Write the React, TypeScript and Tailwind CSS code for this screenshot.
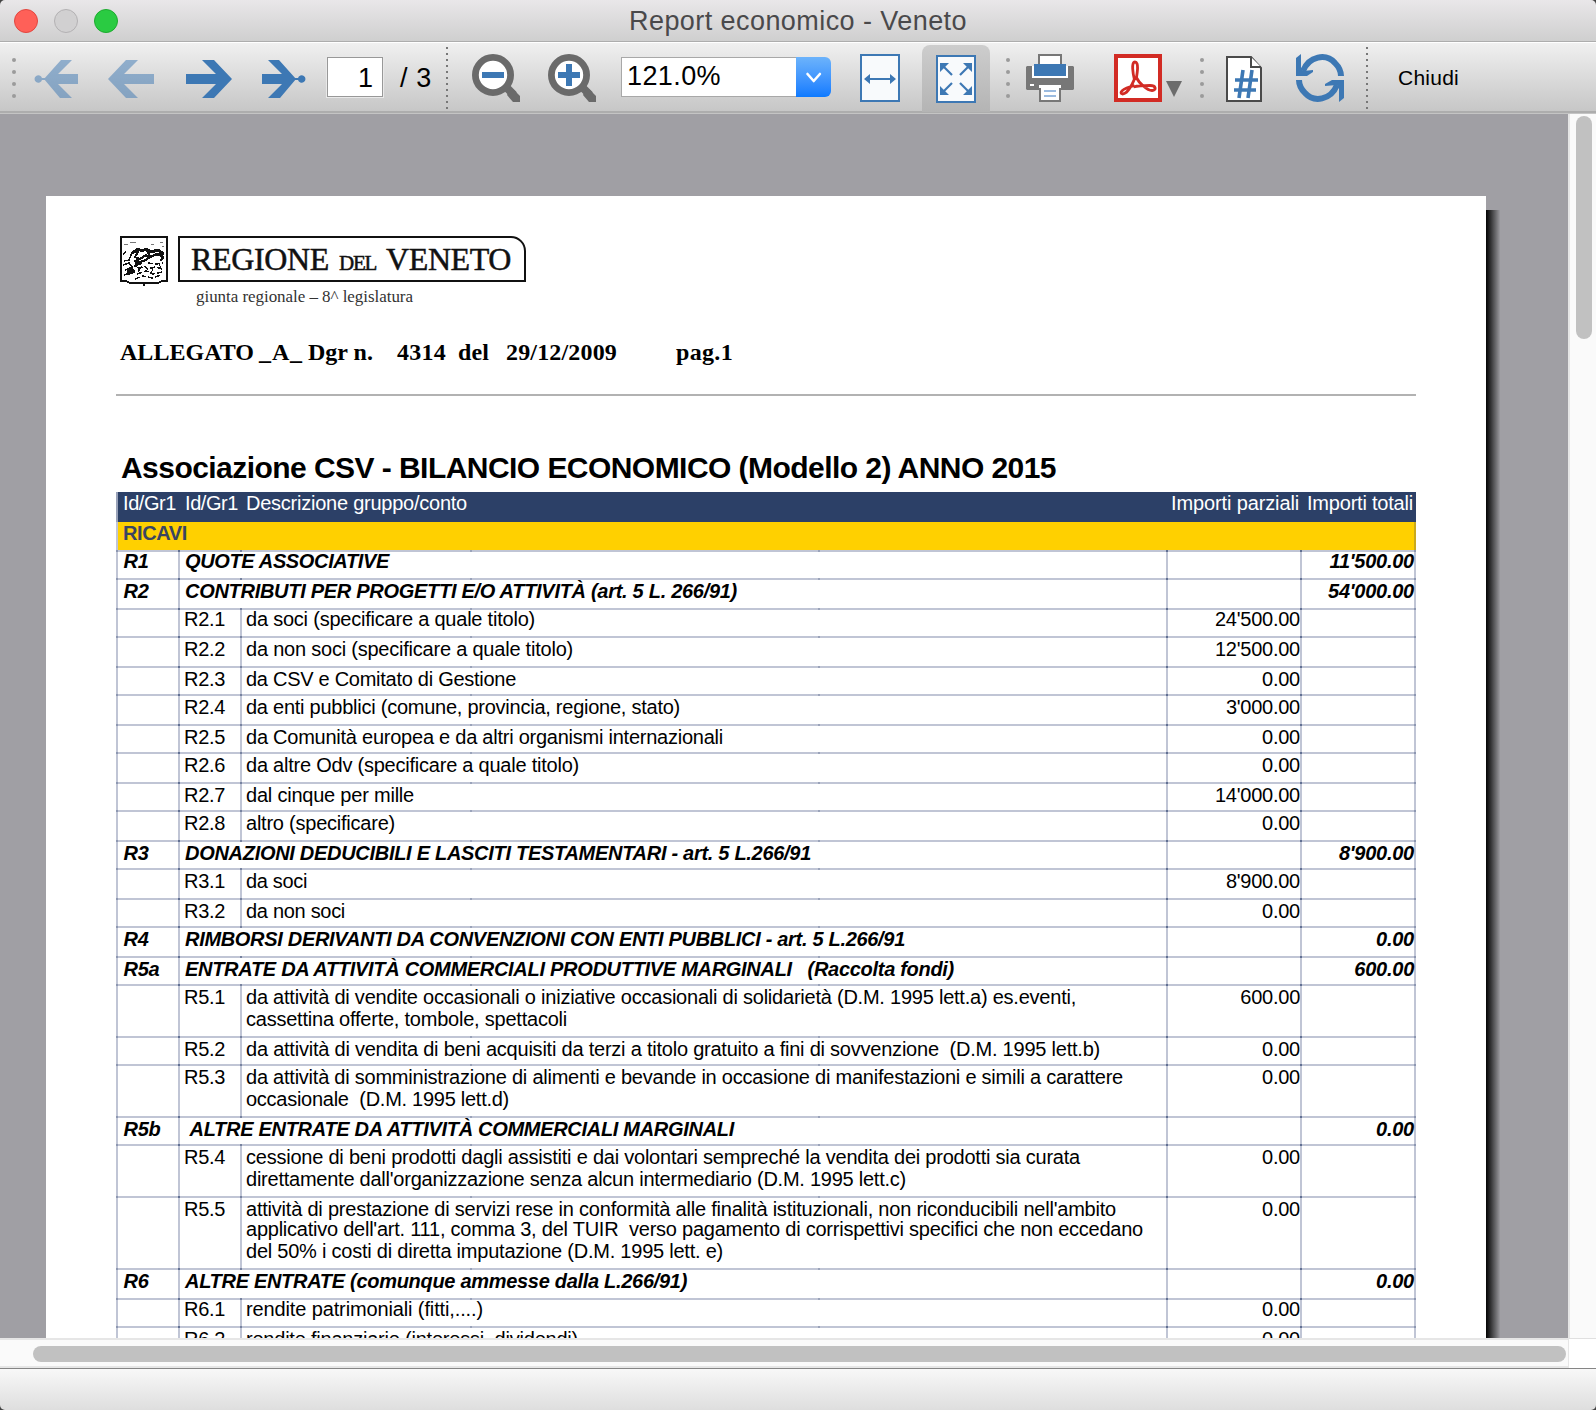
import { useLayoutEffect, useRef, useState } from "react";
import type { ReactNode } from "react";

const BLUE = "#3d78b4";

/** Single line of text whose tracking is adjusted so that it spans the given width. */
function Fit({ w, className = "", children }: { w: number; className?: string; children: string }) {
  const ref = useRef<HTMLSpanElement>(null);
  const [spacing, setSpacing] = useState(0);
  useLayoutEffect(() => {
    if (ref.current) {
      const natural = ref.current.getBoundingClientRect().width;
      setSpacing((w - natural) / children.length);
    }
  }, []);
  return (
    <span ref={ref} className={`inline-block whitespace-pre ${className}`} style={{ letterSpacing: spacing }}>
      {children}
    </span>
  );
}

function Arrow({ flip = false, end = false, faded = false }: { flip?: boolean; end?: boolean; faded?: boolean }) {
  const w = end ? 44 : 46;
  const d = end
    ? "M34 25 17 6H6l14 14H0v10h20L6 44h12z"
    : "M46 25 28 6H16l14 14H0v10h30L16 44h12z";
  return (
    <svg width={w} height="48" viewBox={`0 0 ${w} 48`} fill={BLUE} opacity={faded ? 0.5 : 1}>
      <g transform={flip ? `translate(${w} 0) scale(-1 1)` : undefined}>
        <path d={d} />
        {end && <path d="M32 24h4a3.8 3.8 0 1 1 0 2h-4z" />}
      </g>
    </svg>
  );
}

function Magnifier({ plus = false }: { plus?: boolean }) {
  return (
    <svg width="48" height="48" viewBox="0 0 48 48">
      <path d="M32 31 42 41" stroke="#6a6a6a" strokeWidth="8" />
      <path d="M38 35h3l7 7v6h-7l-6-7z" fill="#6a6a6a" />
      <circle cx="21" cy="21" r="17.6" fill="#fff" stroke="#6a6a6a" strokeWidth="6.8" />
      <path d="M10 18h22v6H10z" fill={BLUE} />
      {plus && <path d="M18 10h6v22h-6z" fill={BLUE} />}
    </svg>
  );
}

function Grip() {
  return (
    <div className="flex w-1 flex-col gap-2">
      {[0, 1, 2, 3].map((i) => (
        <span key={i} className="size-1 rounded-full bg-[#9b9b9b]" />
      ))}
    </div>
  );
}

function Dotted() {
  return (
    <div className="flex w-0.5 flex-col gap-1">
      {Array.from({ length: 11 }, (_, i) => (
        <span key={i} className="size-0.5 bg-[#777]" />
      ))}
    </div>
  );
}

function Toolbar() {
  return (
    <div className="flex h-[69px] items-center bg-linear-to-b from-[#f0f0f0] to-[#c6c6c6] pt-px pl-3 text-black">
      <Grip />
      <div className="ml-[18px]"><Arrow flip end faded /></div>
      <div className="ml-[30px]"><Arrow flip faded /></div>
      <div className="ml-8"><Arrow /></div>
      <div className="ml-[30px]"><Arrow end /></div>
      <div className="mt-[-2px] ml-5 flex h-[42px] w-[58px] items-center justify-end border border-[#e9e9e9]">
        <div className="flex h-10 w-14 items-center justify-end border border-[#989898] bg-white pt-0.5 pr-[9px] text-[27px]">1</div>
      </div>
      <div className="ml-4 w-8 text-[27px] leading-10"><Fit w={32}>/ 3</Fit></div>
      <div className="ml-3.5"><Dotted /></div>
      <div className="ml-6"><Magnifier /></div>
      <div className="ml-7"><Magnifier plus /></div>
      <div className="mt-[-3px] ml-[25px] flex h-10 w-[210px]">
        <div className="flex h-10 w-[175px] items-center border border-r-0 border-[#a8a8a8] bg-white pl-[5px] text-[27px]">
          <Fit w={94}>121.0%</Fit>
        </div>
        <div className="flex h-10 w-[35px] items-center justify-center rounded-r-md bg-linear-to-b from-[#6cb3fb] to-[#0b7aff]">
          <svg width="18" height="12" viewBox="0 0 18 12" fill="none" stroke="#fff" strokeWidth="2.6" strokeLinecap="round" strokeLinejoin="round">
            <path d="m2.5 3 6.2 7 6.2-7" />
          </svg>
        </div>
      </div>
      <svg className="ml-[29px]" width="40" height="48" viewBox="0 0 40 48">
        <path d="M1 1h38v46H1z" fill="#f8fafc" stroke={BLUE} strokeWidth="2" />
        <path d="M8 24h24v2H8z" fill={BLUE} />
        <path d="M4 25l6-5v10zM36 25l-6-5v10z" fill={BLUE} />
      </svg>
      <div className="ml-[22px] flex h-[67px] w-[68px] items-center justify-center self-end rounded-t-lg bg-linear-to-b from-[#cdcdcd] to-[#b4b4b4]">
        <svg width="40" height="48" viewBox="0 0 40 48">
          <path d="M1 1h38v46H1z" fill="#f8fafc" stroke={BLUE} strokeWidth="2" />
          <g fill={BLUE} stroke={BLUE} strokeWidth="2.2">
            <path d="m8 12 8 8M32 12l-8 8M8 36l8-8M32 36l-8-8" />
            <path stroke="none" d="M4 8h9l-9 9zM36 8h-9l9 9zM4 40h9l-9-9zM36 40h-9l9-9z" />
          </g>
        </svg>
      </div>
      <div className="ml-4"><Grip /></div>
      <svg className="ml-4" width="48" height="48" viewBox="0 0 48 48">
        <path d="M0 13l1-1h5v12h36V12h5l1 1v22l-1 1H1l-1-1z" fill="#777" />
        <path d="M13 1h22v12H13z" fill="#fff" stroke="#777" strokeWidth="2" />
        <path d="M6 12h36v12H6z" fill="#fff" />
        <path d="M8 10h32v12H8z" fill={BLUE} />
        <path d="M4 30h4v2H4z" fill="#fff" />
        <path d="M14 32h20v15H14z" fill="#fff" stroke="#777" strokeWidth="2" />
        <path d="M13 31h22v3H13z" fill="#fff" />
        <path d="M18 36h12v2H18zM18 41h12v2H18z" fill="#9bbbe0" />
      </svg>
      <svg className="ml-10" width="48" height="48" viewBox="0 0 48 48">
        <path d="M0 0h48v48H0z" fill="#d22b24" />
        <path d="M4 4h40v40H4z" fill="#fff" />
        <g fill="none" stroke="#d22b24" strokeWidth="2.8">
          <path d="M20.500 26C19 20 17 8 21 8s2.500 10 1 18" />
          <path d="M20.500 25C18 31 13 40 8.500 40c-3.500-1-1.500-5 12-8.500" />
          <path d="M22 23c3 6 11 13.500 16 13.500 5-.5 4-5-2-5-5 0-11 0-16.500 1.500" />
        </g>
      </svg>
      <svg className="mt-[21px] ml-1" width="16" height="16" viewBox="0 0 16 16">
        <path d="M0 0h16L8 16z" fill="#6c6c6c" />
      </svg>
      <div className="ml-[18px]"><Grip /></div>
      <svg className="ml-[22px]" width="36" height="48" viewBox="0 0 36 48">
        <path d="M1 3h24l10 11v33H1z" fill="#fff" stroke="#4a4a4a" strokeWidth="2" />
        <path d="M25 3v10h10" fill="#fff" stroke="#4a4a4a" strokeWidth="2" />
        <path d="m17 16-4 28M26 16l-4 28M9 26h23M8 36h22" stroke={BLUE} strokeWidth="3.600" />
      </svg>
      <svg className="ml-[34px]" width="48" height="48" viewBox="0 0 48 48">
        <path d="M7 17C13 2 30-1 39 9c4 4 6 8 6 13" fill="none" stroke={BLUE} strokeWidth="6" />
        <path d="M0 4 5 0v13l2 4 10-1v2l-6 4H0z" fill={BLUE} />
        <path d="M41 31C35 46 18 49 9 39c-4-4-6-8-6-13" fill="none" stroke={BLUE} strokeWidth="6" />
        <path d="M48 44l-5 4V35l-2-4-12 1v-2l7-4h12z" fill={BLUE} />
      </svg>
      <div className="ml-[22px]"><Dotted /></div>
      <div className="ml-[30px] text-[21px] leading-8"><Fit w={61}>Chiudi</Fit></div>
    </div>
  );
}

/** Horizontal table rule with darker marks where column lines meet it. */
function Rule() {
  return (
    <div className="grid h-0.5 grid-cols-[62px_62px_230px_348px_348px_134px_114px_2px] bg-[#c0c5d5]">
      <i className="w-0.5 bg-[#8d97b1]" />
      <i className="w-0.5 bg-[#5f6e91]" />
      <i className="w-0.5 bg-[#76829f]" />
      <i className="w-0.5 bg-[#9aa3ba]" />
      <i className="w-0.5 bg-[#9aa3ba]" />
      <i className="w-0.5 bg-[#5f6e91]" />
      <i className="w-0.5 bg-[#5f6e91]" />
      <i className="w-0.5 bg-[#8d97b1]" />
    </div>
  );
}

type Line = [string, number];
interface Entry {
  id: string;
  lines: Line[];
  amount: string;
  h: number;
  group?: boolean;
  raised?: boolean;
}

const rows: Entry[] = [
  { id: "R1", group: true, raised: true, h: 28, amount: "11'500.00", lines: [["QUOTE ASSOCIATIVE", 204]] },
  { id: "R2", group: true, h: 30, amount: "54'000.00", lines: [["CONTRIBUTI PER PROGETTI E/O ATTIVITÀ (art. 5 L. 266/91)", 552]] },
  { id: "R2.1", raised: true, h: 28, amount: "24'500.00", lines: [["da soci (specificare a quale titolo)", 289]] },
  { id: "R2.2", h: 30, amount: "12'500.00", lines: [["da non soci (specificare a quale titolo)", 327]] },
  { id: "R2.3", h: 28, amount: "0.00", lines: [["da CSV e Comitato di Gestione", 270]] },
  { id: "R2.4", h: 30, amount: "3'000.00", lines: [["da enti pubblici (comune, provincia, regione, stato)", 434]] },
  { id: "R2.5", h: 28, amount: "0.00", lines: [["da Comunità europea e da altri organismi internazionali", 477]] },
  { id: "R2.6", h: 30, amount: "0.00", lines: [["da altre Odv (specificare a quale titolo)", 333]] },
  { id: "R2.7", h: 28, amount: "14'000.00", lines: [["dal cinque per mille", 168]] },
  { id: "R2.8", h: 30, amount: "0.00", lines: [["altro (specificare)", 149]] },
  { id: "R3", group: true, h: 28, amount: "8'900.00", lines: [["DONAZIONI DEDUCIBILI E LASCITI TESTAMENTARI - art. 5 L.266/91", 626]] },
  { id: "R3.1", h: 30, amount: "8'900.00", lines: [["da soci", 61]] },
  { id: "R3.2", h: 28, amount: "0.00", lines: [["da non soci", 99]] },
  { id: "R4", group: true, h: 30, amount: "0.00", lines: [["RIMBORSI DERIVANTI DA CONVENZIONI CON ENTI PUBBLICI - art. 5 L.266/91", 720]] },
  { id: "R5a", group: true, h: 28, amount: "600.00", lines: [["ENTRATE DA ATTIVITÀ COMMERCIALI PRODUTTIVE MARGINALI   (Raccolta fondi)", 769]] },
  {
    id: "R5.1", h: 52, amount: "600.00",
    lines: [
      ["da attività di vendite occasionali o iniziative occasionali di solidarietà (D.M. 1995 lett.a) es.eventi,", 830],
      ["cassettina offerte, tombole, spettacoli", 321],
    ],
  },
  { id: "R5.2", h: 28, amount: "0.00", lines: [["da attività di vendita di beni acquisiti da terzi a titolo gratuito a fini di sovvenzione  (D.M. 1995 lett.b)", 854]] },
  {
    id: "R5.3", h: 52, amount: "0.00",
    lines: [
      ["da attività di somministrazione di alimenti e bevande in occasione di manifestazioni e simili a carattere", 877],
      ["occasionale  (D.M. 1995 lett.d)", 263],
    ],
  },
  { id: "R5b", group: true, h: 28, amount: "0.00", lines: [[" ALTRE ENTRATE DA ATTIVITÀ COMMERCIALI MARGINALI", 549]] },
  {
    id: "R5.4", h: 52, amount: "0.00",
    lines: [
      ["cessione di beni prodotti dagli assistiti e dai volontari sempreché la vendita dei prodotti sia curata", 834],
      ["direttamente dall'organizzazione senza alcun intermediario (D.M. 1995 lett.c)", 660],
    ],
  },
  {
    id: "R5.5", h: 72, amount: "0.00",
    lines: [
      ["attività di prestazione di servizi rese in conformità alle finalità istituzionali, non riconducibili nell'ambito", 870],
      ["applicativo dell'art. 111, comma 3, del TUIR  verso pagamento di corrispettivi specifici che non eccedano", 897],
      ["del 50% i costi di diretta imputazione (D.M. 1995 lett. e)", 477],
    ],
  },
  { id: "R6", group: true, h: 30, amount: "0.00", lines: [["ALTRE ENTRATE (comunque ammesse dalla L.266/91)", 502]] },
  { id: "R6.1", raised: true, h: 28, amount: "0.00", lines: [["rendite patrimoniali (fitti,....)", 237]] },
  { id: "R6.2", h: 30, amount: "0.00", lines: [["rendite finanziarie (interessi, dividendi)", 332]] },
];

function Cell({ children, className = "" }: { children?: ReactNode; className?: string }) {
  return <div className={`min-w-0 border-l-2 border-[#c0c5d5] ${className}`}>{children}</div>;
}

function Row({ row }: { row: Entry }) {
  const shift = row.raised ? "mt-[-2px]" : "";
  const lines = row.lines.map(([text, w], i) => (
    <div key={i} className={`h-[22px] ${i === 1 && row.lines.length === 3 ? "mt-[-2px]" : ""}`}>
      <Fit w={w}>{text}</Fit>
    </div>
  ));
  return (
    <div style={{ height: row.h }} className="flex flex-col">
      <Rule />
      {row.group ? (
        <div className="grid flex-1 grid-cols-[62px_988px_134px_116px] border-r-2 border-[#c0c5d5] font-bold italic">
          <Cell><div className={`pl-[5.5px] tracking-[-0.3px] ${shift}`}>{row.id}</div></Cell>
          <Cell><div className={`pl-[5px] ${shift}`}>{lines}</div></Cell>
          <Cell />
          <Cell><div className={`pr-0.5 text-right tracking-[-0.25px] ${shift}`}>{row.amount}</div></Cell>
        </div>
      ) : (
        <div className="grid flex-1 grid-cols-[62px_62px_926px_134px_116px] border-r-2 border-[#c0c5d5]">
          <Cell />
          <Cell><div className={`pl-1 ${shift}`}><Fit w={41}>{row.id}</Fit></div></Cell>
          <Cell><div className={`pl-1 ${shift}`}>{lines}</div></Cell>
          <Cell><div className={`text-right tracking-[-0.25px] ${shift}`}>{row.amount}</div></Cell>
          <Cell />
        </div>
      )}
    </div>
  );
}

function Emblem() {
  return (
    <svg width="48" height="50" viewBox="0 0 48 50" fill="none" stroke="#111" shapeRendering="crispEdges">
      <path d="M1 1h46v44h-5l-4 2H10l-4-2H1z" strokeWidth="2" />
      <path d="M24 46v4" strokeWidth="2" />
      <path d="M4 8h4M10 6h6M31 8h3M40 6h3M42 10h2" strokeWidth="1" stroke="#777" />
      <path d="M12 17l6-4 4 2 4-2 5 3 7-2 6 4" strokeWidth="3" />
      <path d="M11 20c0-4 4-5 7-4l-3 5 5 2 6-4 3 3 7-4 6 2" strokeWidth="2" />
      <path d="M14 25l6 1 6-2 4-4M18 22l-2 7 6-2M34 19l7-1 2 4-3 3M27 14l3 7" strokeWidth="2.500" />
      <path d="M3 18l3-2M4 25l5-1 2-5M3 29l6-2 3 4M5 34l8-2M4 39l5-2" strokeWidth="1.500" />
      <path d="M7 33l5-2 3 5-7 3z" fill="#111" />
      <path d="M18 33l6-3 4 3 7-2 8 2M17 38l9-3 7 3 9-2M15 43l8-3 9 2 9-3M28 27l8 1 7-1" strokeWidth="1.500" strokeDasharray="5 2" />
      <path d="M14 29l6 4M22 30l-4 6M33 32l-2 6M39 28l3 6" strokeWidth="1.200" />
    </svg>
  );
}

function Letterhead() {
  return (
    <div className="flex pl-1">
      <Emblem />
      <div className="ml-2.5">
        <div className="relative h-[46px] w-[348px]">
          <svg className="absolute inset-0" width="348" height="46" viewBox="0 0 348 46" fill="none">
            <path d="M1 1h332a14 14 0 0 1 14 14v30H1z" stroke="#111" strokeWidth="2" />
          </svg>
          <div className="flex items-baseline pl-[13px] font-['Liberation_Serif'] text-[32px] leading-[47px] text-[#111] [-webkit-text-stroke:0.5px_#111]">
            <Fit w={138}>REGIONE</Fit>
            <Fit w={37} className="ml-[10px] text-[21px]">DEL</Fit>
            <Fit w={125} className="ml-[10px]">VENETO</Fit>
          </div>
        </div>
        <div className="mt-[3px] pl-[18px] font-['Liberation_Serif'] text-[17px] leading-6 text-[#333]">
          <Fit w={217}>giunta regionale – 8^ legislatura</Fit>
        </div>
      </div>
    </div>
  );
}

function Report() {
  return (
    <div className="h-[1142px] w-[1440px] shrink-0 overflow-hidden bg-white pt-10 pl-[70px] text-black">
      <div className="h-[98px]"><Letterhead /></div>
      <div className="flex h-[60px] pl-1 font-['Liberation_Serif'] text-[24px] leading-[36px] font-bold">
        <Fit w={134}>ALLEGATO</Fit>
        <Fit w={44} className="ml-[5px]">_A_</Fit>
        <Fit w={65} className="ml-[5px]">Dgr n.</Fit>
        <Fit w={49} className="ml-[24px]">4314</Fit>
        <Fit w={31} className="ml-[12px]">del</Fit>
        <Fit w={111} className="ml-[17px]">29/12/2009</Fit>
        <Fit w={57} className="ml-[59px]">pag.1</Fit>
      </div>
      <div className="h-0.5 w-[1300px] bg-[#b2b2b2]" />
      <div className="h-24 pt-[52px] pl-[5px] text-[30px] leading-[40px] font-bold">
        <Fit w={935}>Associazione CSV - BILANCIO ECONOMICO (Modello 2) ANNO 2015</Fit>
      </div>
      <div className="w-[1300px] text-[20px] leading-[22px]">
        <div className="flex h-[30px] border-l-2 border-[#98a1b8] bg-[#2c4067] text-white">
          <Fit w={53} className="ml-[5px]">Id/Gr1</Fit>
          <Fit w={53} className="ml-[9px]">Id/Gr1</Fit>
          <Fit w={221} className="ml-2">Descrizione gruppo/conto</Fit>
          <Fit w={128} className="ml-[704px]">Importi parziali</Fit>
          <Fit w={106} className="ml-2">Importi totali</Fit>
        </div>
        <div className="h-7 border-r-2 border-l-2 border-r-[#c9a91d] border-l-[#c0c5d5] bg-[#ffd000] pl-[5px] font-bold text-[#3a4562]">
          <Fit w={64}>RICAVI</Fit>
        </div>
        {rows.map((row) => (
          <Row key={row.id} row={row} />
        ))}
      </div>
    </div>
  );
}

export default function App() {
  return (
    <div className="flex h-[1410px] w-[1596px] flex-col overflow-hidden bg-[#444] font-['Liberation_Sans',sans-serif]">
      <header className="grid h-[41px] shrink-0 grid-cols-[200px_1fr_200px] items-center rounded-t-[5px] bg-linear-to-b from-[#e9e7e9] to-[#cfcfcf]">
        <div className="flex gap-4 pl-3.5">
          <span className="size-6 rounded-full border border-[#e2463f] bg-[#ff6058]" />
          <span className="size-6 rounded-full border border-[#b3b1b3] bg-[#d1d0d1]" />
          <span className="size-6 rounded-full border border-[#1dab2f] bg-[#2acb42]" />
        </div>
        <h1 className="text-center text-[27px] leading-10 text-[#4a494b]"><Fit w={338}>Report economico - Veneto</Fit></h1>
      </header>
      <div className="h-px shrink-0 bg-[#adadad]" />
      <div className="shrink-0 border-t border-white">
        <div className="-mt-px pt-px"><Toolbar /></div>
        <div className="mt-[-1px] h-0.5 bg-[#adadad]" />
        <div className="h-px bg-[#c4c4c4]" />
      </div>
      <main className="flex h-[1224px] shrink-0">
        <div className="flex w-[1568px] overflow-hidden bg-[#a09fa4] pt-[82px] pl-[46px]">
          <Report />
          <div className="mt-3.5 w-3.5 bg-linear-to-r from-[#050505] via-[#4c4c4e] to-[#9b9a9f]" />
        </div>
        <div className="w-7 border-l-2 border-[#e6e6e6] bg-[#fafafa] pt-0.5 pl-1.5">
          <div className="h-[223px] w-4 rounded-full bg-[#c1c1c1]" />
        </div>
      </main>
      <div className="flex h-[30px] shrink-0 bg-white">
        <div className="w-[1569px] border-t-2 border-r border-b-2 border-[#e6e6e6] bg-[#fafafa] pt-1.5 pl-[33px]">
          <div className="h-4 w-[1533px] rounded-full bg-[#c1c1c1]" />
        </div>
        <div className="flex-1 border-t border-[#e0e0e0]" />
      </div>
      <footer className="h-[42px] shrink-0 rounded-b-[5px] border-t border-[#858585] bg-linear-to-b from-[#f8f8f8] to-[#dedede]" />
    </div>
  );
}
